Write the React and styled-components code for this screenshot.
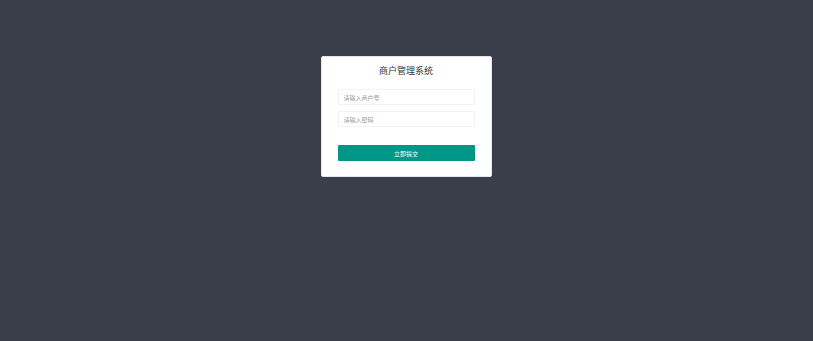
import React from 'react'
import styled, { createGlobalStyle } from 'styled-components'

const GlobalStyle = createGlobalStyle`
  html, body {
    margin: 0;
    padding: 0;
    height: 100%;
    background: #3a3e4a;
    font-family: "Noto Sans CJK SC", "Liberation Sans", sans-serif;
  }
  #root {
    height: 100%;
  }
`

const Page = styled.div`
  width: 100%;
  height: 341px;
  background: #3a3e4a;
  display: flex;
  justify-content: center;
  align-items: flex-start;
  padding-top: 56px;
  padding-right: 1px;
  box-sizing: border-box;
`

const Card = styled.div`
  width: 171px;
  height: 121px;
  box-sizing: border-box;
  background: #fff;
  border: 1px solid #e6e6e6;
  border-radius: 2px;
  padding: 0 16px;
  display: flex;
  flex-direction: column;
`

const Title = styled.h1`
  margin: 0;
  height: 32px;
  line-height: 28px;
  font-size: 9px;
  font-weight: normal;
  color: #333;
  text-align: center;
`

const Form = styled.form`
  display: flex;
  flex-direction: column;
  gap: 6px;
`

const Input = styled.input`
  height: 16px;
  box-sizing: border-box;
  border: 1px solid #f2f2f2;
  border-radius: 1px;
  padding: 0 5px;
  font-size: 6px;
  font-family: inherit;
  outline: none;
  color: #333;
  &::placeholder {
    color: #999;
  }
`

const Submit = styled.button`
  margin-top: 12px;
  height: 16px;
  border: none;
  border-radius: 1px;
  background: #009688;
  color: #fff;
  font-size: 6px;
  font-family: inherit;
  padding: 0;
  cursor: pointer;
`

export default function App() {
  return (
    <>
      <GlobalStyle />
      <Page>
        <Card>
          <Title>商户管理系统</Title>
          <Form onSubmit={(e) => e.preventDefault()}>
            <Input type="text" placeholder="请输入商户号" />
            <Input type="password" placeholder="请输入密码" />
            <Submit type="submit">立即提交</Submit>
          </Form>
        </Card>
      </Page>
    </>
  )
}
